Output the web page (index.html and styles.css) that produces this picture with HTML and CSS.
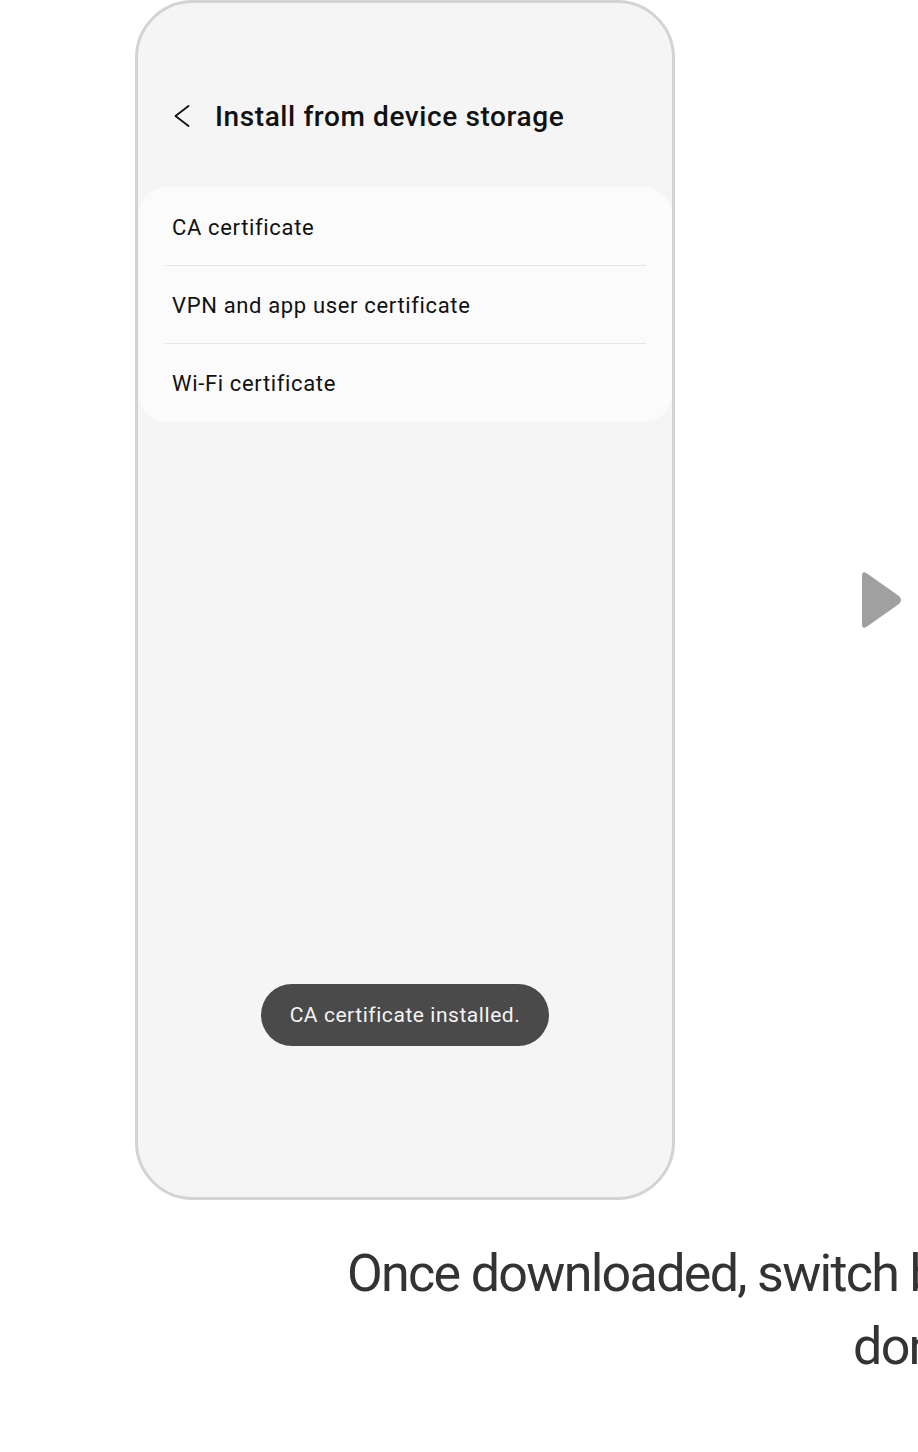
FILE: index.html
```html
<!DOCTYPE html>
<html lang="en">
<head>
    <meta charset="UTF-8">
    <meta name="viewport" content="width=device-width, initial-scale=1.0">
    <title>Install certificate</title>
    <link rel="stylesheet" href="styles.css">
</head>
<body>
    <div class="stage">
        <div class="phone">
            <div class="appbar">
                <svg class="back" width="18" height="28" viewBox="0 0 18 28">
                    <polyline points="15.5,4 2.5,14 15.5,24" fill="none" stroke="#111" stroke-width="1.8" stroke-linecap="round" stroke-linejoin="round"/>
                </svg>
                <div class="title">Install from device storage</div>
            </div>
            <div class="card">
                <div class="row">CA certificate</div>
                <div class="divider"></div>
                <div class="row">VPN and app user certificate</div>
                <div class="divider"></div>
                <div class="row">Wi-Fi certificate</div>
            </div>
            <div class="toast">CA certificate installed.</div>
        </div>
        <svg class="next" width="40" height="60" viewBox="0 0 40 60">
            <path d="M0 6 Q0 0 5 3.5 L37 26 Q41 30 37 34 L5 56.5 Q0 60 0 54 Z" fill="#a0a0a0"/>
        </svg>
    </div>
    <div class="caption">
        <div class="line first">Once downloaded, switch back to Settings</div>
        <div class="line second">done.</div>
    </div>
</body>
</html>
```

FILE: styles.css
```css
body {
    margin: 0;
    padding: 0;
    background-color: #fff;
    font-family: Roboto, "Liberation Sans", sans-serif;
    width: 918px;
    height: 1452px;
    overflow: hidden;
}

.stage {
    display: flex;
    align-items: center;
    padding-left: 135px;
}

.phone {
    width: 540px;
    height: 1200px;
    box-sizing: border-box;
    border: 3px solid #d3d3d3;
    border-radius: 58px;
    background-color: #f5f5f5;
    display: flex;
    flex-direction: column;
    overflow: hidden;
    flex-shrink: 0;
}

.appbar {
    display: flex;
    align-items: center;
    padding: 97px 0 0 35px;
    height: 32px;
}

.back {
    display: block;
}

.title {
    margin-left: 24px;
    font-size: 28px;
    font-weight: 500;
    letter-spacing: 0.6px;
    color: #111;
}

.card {
    margin: 55px 0 0 1px;
    width: 533px;
    background-color: #fbfbfb;
    border-radius: 28px;
    padding: 1px 0;
}

.row {
    height: 77px;
    display: flex;
    align-items: center;
    padding: 2px 0 0 33px;
    box-sizing: border-box;
    font-size: 22px;
    letter-spacing: 0.65px;
    color: #111;
}

.divider {
    height: 1px;
    margin: 0 26px;
    background-color: #e6e6e6;
}

.toast {
    margin-top: auto;
    margin-bottom: 151px;
    align-self: center;
    height: 62px;
    padding: 0 29px;
    border-radius: 31px;
    background-color: #4a4a4a;
    color: #f4f4f4;
    font-size: 21px;
    letter-spacing: 0.55px;
    display: flex;
    align-items: center;
}

.next {
    display: block;
    margin-left: 187px;
    flex-shrink: 0;
}

.caption {
    margin-top: 37px;
    color: #333;
    font-size: 52px;
    letter-spacing: -1.7px;
    white-space: nowrap;
    line-height: 73px;
}

.first {
    padding-left: 347px;
}

.second {
    padding-left: 853px;
}
```
